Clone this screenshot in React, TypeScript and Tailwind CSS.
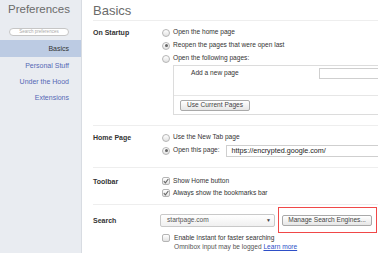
function Radio({ checked = false }: { checked?: boolean }) {
  return (
    <span className="w-[8px] h-[8px] rounded-full border border-[#b5b5b5] bg-gradient-to-b from-white to-[#e2e2e2] flex items-center justify-center shrink-0">
      {checked && <span className="w-[3px] h-[3px] rounded-full bg-[#666]" />}
    </span>
  )
}

function Checkbox({ checked = true }: { checked?: boolean }) {
  return (
    <span className="w-[8px] h-[8px] rounded-[2px] border border-[#b5b5b5] bg-gradient-to-b from-white to-[#e2e2e2] flex items-center justify-center shrink-0">
      {checked && (
        <svg width="6" height="6" viewBox="0 0 6 6">
          <path d="M0.8 3.2 L2.4 4.8 L5.3 1" fill="none" stroke="#666" strokeWidth="1.1" />
        </svg>
      )}
    </span>
  )
}

const navItems = ['Personal Stuff', 'Under the Hood', 'Extensions']

export default function App() {
  return (
    <div className="w-[378px] h-[253px] flex overflow-hidden bg-white leading-none text-[#333] font-['Liberation_Sans',Arial,sans-serif]">
      {/* sidebar */}
      <div className="w-[82px] shrink-0 bg-[#e9ecf1] border-r border-[#d8dce2] flex flex-col">
        <div className="h-[22px] pt-[4px] pr-[11px] text-right text-[11.5px] text-[#6b6b6b]">Preferences</div>
        <div className="flex justify-end pr-[12px] mt-[6px]">
          <div className="w-[60px] h-[8px] rounded-full bg-white border border-[#c6c6c6] text-[4.5px] text-[#aaa] flex items-center justify-center">
            Search preferences
          </div>
        </div>
        <div className="mt-[4px] h-[17px] bg-[#bccbe3] pr-[12px] flex items-center justify-end text-[7px] text-[#333]">Basics</div>
        {navItems.map((item) => (
          <div key={item} className="h-[16px] pr-[12px] flex items-center justify-end text-[7px] text-[#5568b5]">
            {item}
          </div>
        ))}
      </div>

      {/* main */}
      <div className="flex-1 min-w-0 pl-[11px] text-[6.6px]">
        <div className="h-[21px] pt-[4px] text-[13px] text-[#6b6b6b] border-b border-[#eeeeee]">Basics</div>

        {/* On Startup */}
        <div className="flex pt-[5px] pb-[10px]">
          <div className="w-[69px] shrink-0 h-[13px] flex items-center font-bold text-[7px]">On Startup</div>
          <div className="flex-1 min-w-0">
            <div className="h-[13px] flex items-center gap-[3px]"><Radio /><span>Open the home page</span></div>
            <div className="h-[13px] flex items-center gap-[3px]"><Radio checked /><span>Reopen the pages that were open last</span></div>
            <div className="h-[13px] flex items-center gap-[3px]"><Radio /><span>Open the following pages:</span></div>
            <div className="ml-[11px] border-t border-l border-b border-[#dcdcdc]">
              <div className="h-[30px] border-b border-[#e6e6e6]">
                <div className="h-[14px] flex items-center">
                  <span className="ml-[17px] w-[128px]">Add a new page</span>
                  <span className="flex-1 h-[11px] border border-r-0 border-[#cfcfcf]" />
                </div>
              </div>
              <div className="h-[18px] flex items-center pl-[6px]">
                <span className="h-[11px] px-[6px] border border-[#a9a9a9] rounded-[2px] bg-gradient-to-b from-white to-[#e6e6e6] flex items-center text-[#444]">
                  Use Current Pages
                </span>
              </div>
            </div>
          </div>
        </div>

        {/* Home Page */}
        <div className="flex pt-[5px] pb-[10px] border-t border-[#eeeeee]">
          <div className="w-[69px] shrink-0 h-[13px] flex items-center font-bold text-[7px]">Home Page</div>
          <div className="flex-1 min-w-0">
            <div className="h-[13px] flex items-center gap-[3px]"><Radio /><span>Use the New Tab page</span></div>
            <div className="h-[13px] flex items-center gap-[3px]">
              <Radio checked />
              <span>Open this page:</span>
              <span className="flex-1 h-[12px] ml-[3px] border border-r-0 border-[#cfcfcf] flex items-center pl-[5px] text-[7.2px] text-[#222]">
                https://encrypted.google.com/
              </span>
            </div>
          </div>
        </div>

        {/* Toolbar */}
        <div className="flex pt-[7px] pb-[5px] border-t border-[#eeeeee]">
          <div className="w-[69px] shrink-0 h-[12px] flex items-center font-bold text-[7px]">Toolbar</div>
          <div className="flex-1 min-w-0">
            <div className="h-[12px] flex items-center gap-[3px]"><Checkbox /><span>Show Home button</span></div>
            <div className="h-[12px] flex items-center gap-[3px]"><Checkbox /><span>Always show the bookmarks bar</span></div>
          </div>
        </div>

        {/* Search */}
        <div className="flex pt-[2px] border-t border-[#eeeeee]">
          <div className="w-[67px] shrink-0 h-[26px] flex items-center font-bold text-[7px]">Search</div>
          <div className="flex-1 min-w-0">
            <div className="h-[26px] flex items-center">
              <div className="w-[115px] h-[13px] border border-[#c9c9c9] rounded-[2px] bg-gradient-to-b from-white to-[#f0f0f0] flex items-center justify-between pl-[6px] pr-[3px]">
                <span className="text-[#555]">startpage.com</span>
                <span className="text-[5px] text-[#444]">▼</span>
              </div>
              <div className="ml-[3px] w-[99px] h-[26px] border border-[#f04848] pl-[3px] pr-[4px] flex items-center">
                <span className="w-full h-[11px] border border-[#a9a9a9] rounded-[2px] bg-gradient-to-b from-white to-[#e6e6e6] flex items-center justify-center text-[#444]">
                  Manage Search Engines...
                </span>
              </div>
            </div>
            <div className="flex gap-[4px] pl-[2px] mt-[1px]">
              <Checkbox checked={false} />
              <div className="pt-[1px]">
                <div className="h-[9px]">Enable Instant for faster searching</div>
                <div className="h-[9px] text-[#555]">
                  Omnibox input may be logged <span className="text-[#2e4fc7] underline">Learn more</span>
                </div>
              </div>
            </div>
          </div>
        </div>
      </div>
    </div>
  )
}
